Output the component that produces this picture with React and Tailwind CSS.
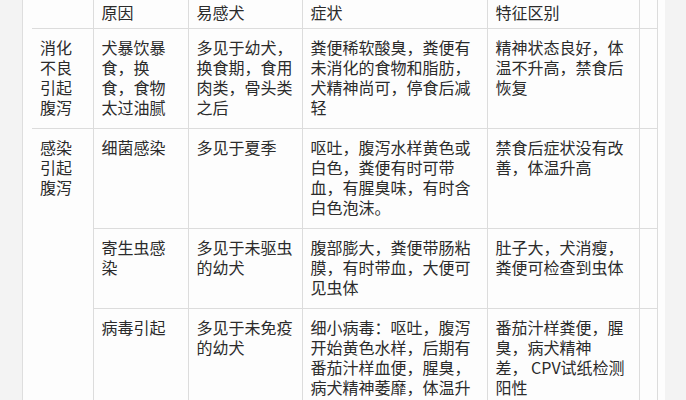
const rows = [
  {
    group: "消化不良引起腹泻",
    span: 1,
    cause: "犬暴饮暴食，换食，食物太过油腻",
    dogs: "多见于幼犬，换食期，食用肉类，骨头类之后",
    symptom: "粪便稀软酸臭，粪便有未消化的食物和脂肪，犬精神尚可，停食后减轻",
    diff: "精神状态良好，体温不升高，禁食后恢复",
  },
  {
    group: "感染引起腹泻",
    span: 3,
    cause: "细菌感染",
    dogs: "多见于夏季",
    symptom: "呕吐，腹泻水样黄色或白色，粪便有时可带血，有腥臭味，有时含白色泡沫。",
    diff: "禁食后症状没有改善，体温升高",
  },
  {
    cause: "寄生虫感染",
    dogs: "多见于未驱虫的幼犬",
    symptom: "腹部膨大，粪便带肠粘膜，有时带血，大便可见虫体",
    diff: "肚子大，犬消瘦，粪便可检查到虫体",
  },
  {
    cause: "病毒引起",
    dogs: "多见于未免疫的幼犬",
    symptom: "细小病毒：呕吐，腹泻开始黄色水样，后期有番茄汁样血便，腥臭，病犬精神萎靡，体温升高",
    diff: (
      <>
        番茄汁样粪便，腥
        <br />
        臭，病犬精神
        <br />
        差， CPV试纸检测阳性
      </>
    ),
  },
];

const cell = "border border-[#dcdcdc] pl-[8px] pr-[8px] pt-[8px] pb-[11px] align-top";
const head = "border border-[#dcdcdc] pl-[8px] pr-[8px] pt-[8px] pb-[6px] align-top text-left font-normal";

export default function App() {
  return (
    <div
      className="flex h-[400px] w-[686px] overflow-hidden bg-[#f3f3f3] text-[16px] leading-[20px] text-[#2b2b2b]"
      style={{ fontFamily: '"Noto Sans CJK SC", "Noto Sans", sans-serif' }}
    >
      <div className="w-[22px] shrink-0" />
      <div className="w-[643px] shrink-0 border-l border-[#dedede] bg-[#fdfdfd] pl-[9px]">
        <table className="mt-[-7px] w-[625px] table-fixed border-collapse border-l-0">
          <colgroup>
            <col className="w-[61px]" />
            <col className="w-[95px]" />
            <col className="w-[114px]" />
            <col className="w-[185px]" />
            <col className="w-[152px]" />
            <col className="w-[18px]" />
          </colgroup>
          <thead>
            <tr>
              <th className={`${head} border-l-0`}></th>
              <th className={head}>原因</th>
              <th className={head}>易感犬</th>
              <th className={head}>症状</th>
              <th className={head}>特征区别</th>
              <th className={head}></th>
            </tr>
          </thead>
          <tbody>
            {rows.map((r, i) => (
              <tr key={i}>
                {r.group && (
                  <td rowSpan={r.span} className={`${cell} border-l-0`}>
                    {r.group}
                  </td>
                )}
                <td className={cell}>{r.cause}</td>
                <td className={cell}>{r.dogs}</td>
                <td className={cell}>{r.symptom}</td>
                <td className={cell}>{r.diff}</td>
                <td className={cell}></td>
              </tr>
            ))}
          </tbody>
        </table>
      </div>
    </div>
  );
}
